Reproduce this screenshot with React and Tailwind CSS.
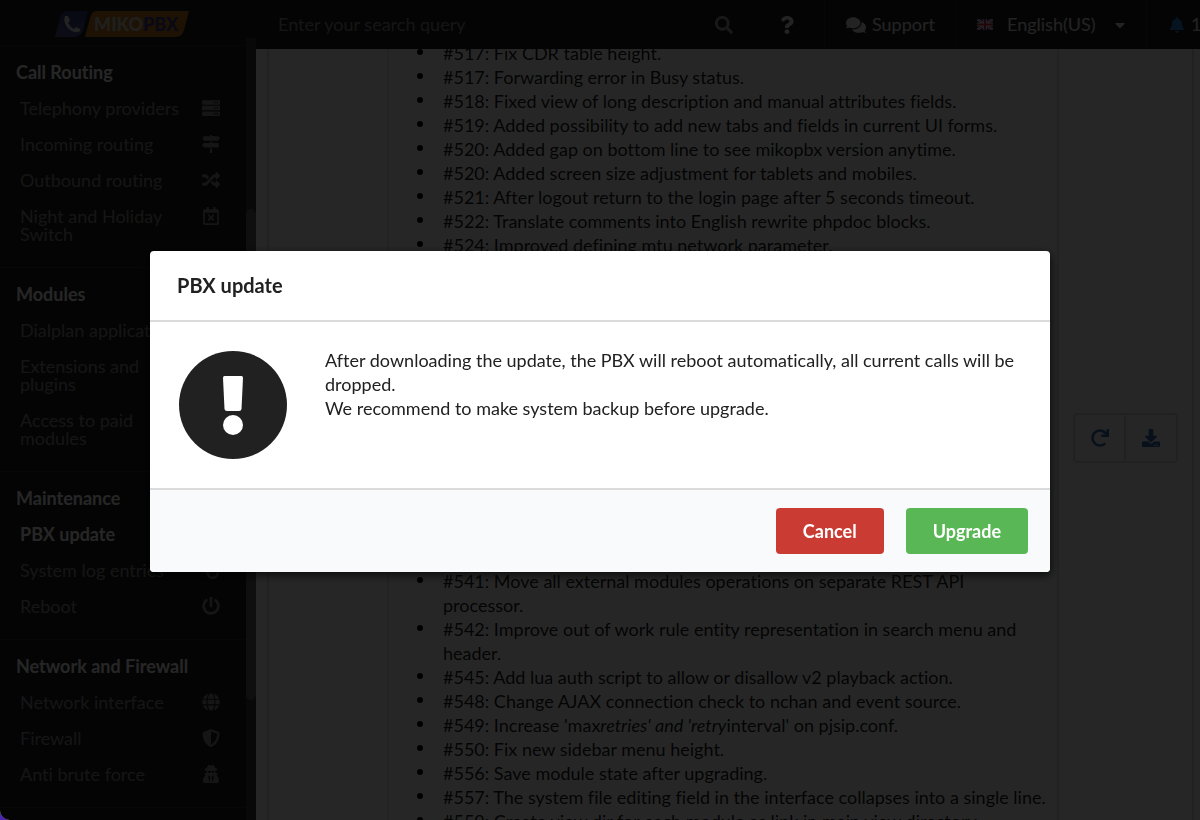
import {
  FaServer, FaMapSigns, FaRandom, FaRegCalendarTimes, FaPowerOff, FaStethoscope, FaGlobe,
  FaShieldAlt, FaUserSecret, FaSearch, FaQuestion, FaComments, FaBell, FaCaretDown,
  FaRedo, FaDownload,
} from 'react-icons/fa';

const groups = [
  {
    title: 'Call Routing',
    items: [
      { label: 'Telephony providers', icon: FaServer },
      { label: 'Incoming routing', icon: FaMapSigns },
      { label: 'Outbound routing', icon: FaRandom },
      { label: 'Night and Holiday Switch', icon: FaRegCalendarTimes },
    ],
  },
  {
    title: 'Modules',
    items: [
      { label: 'Dialplan applications' },
      { label: 'Extensions and plugins' },
      { label: 'Access to paid modules' },
    ],
  },
  {
    title: 'Maintenance',
    items: [
      { label: 'PBX update', active: true },
      { label: 'System log entries', icon: FaStethoscope },
      { label: 'Reboot', icon: FaPowerOff },
    ],
  },
  {
    title: 'Network and Firewall',
    items: [
      { label: 'Network interface', icon: FaGlobe },
      { label: 'Firewall', icon: FaShieldAlt },
      { label: 'Anti brute force', icon: FaUserSecret },
    ],
  },
];

const notesBefore = [
  '#517: Fix CDR table height.',
  '#517: Forwarding error in Busy status.',
  '#518: Fixed view of long description and manual attributes fields.',
  '#519: Added possibility to add new tabs and fields in current UI forms.',
  '#520: Added gap on bottom line to see mikopbx version anytime.',
  '#520: Added screen size adjustment for tablets and mobiles.',
  '#521: After logout return to the login page after 5 seconds timeout.',
  '#522: Translate comments into English rewrite phpdoc blocks.',
  '#524: Improved defining mtu network parameter.',
];

const notesAfter = [
  '#541: Move all external modules operations on separate REST API processor.',
  '#542: Improve out of work rule entity representation in search menu and header.',
  '#545: Add lua auth script to allow or disallow v2 playback action.',
  '#548: Change AJAX connection check to nchan and event source.',
  <>#549: Increase 'max<em>retries' and 'retry</em>interval' on pjsip.conf.</>,
  '#550: Fix new sidebar menu height.',
  '#556: Save module state after upgrading.',
  '#557: The system file editing field in the interface collapses into a single line.',
  '#559: Create view dir for each module as link in main view directory.',
];

function Logo() {
  return (
    <svg viewBox="0 0 134 26" className="h-[26px] w-[134px]" role="img" aria-label="MikoPBX">
      <defs>
        <linearGradient id="phone" x1="0" y1="0" x2="0" y2="1">
          <stop offset="0" stopColor="#2b3a7c" />
          <stop offset="1" stopColor="#5a5796" />
        </linearGradient>
      </defs>
      <path d="M11 0H33L28 19Q26 26 19 26H0L5 7Q7 0 11 0Z" fill="url(#phone)" />
      <path d="M41 0H134L129 19Q127 26 121 26H30L35 7Q37 0 41 0Z" fill="#c47a1a" />
      <path d="M10 5Q13 4 14 7L15 10L13 12Q15 16 19 18L21 16L25 18Q26 20 23 21Q17 22 12 16Q8 10 10 5Z" fill="#e6e6e6" />
      <text x="39" y="20" fontFamily="Lato, sans-serif" fontWeight="900" fontSize="18" fill="#d0d0d0">MIKO<tspan fill="#3f3c8c">PBX</tspan></text>
    </svg>
  );
}

function Flag() {
  return (
    <svg viewBox="0 0 16 11" className="h-[11px] w-4" aria-hidden="true">
      <rect width="16" height="11" fill="#2b3f8f" />
      <path d="M0 0L16 11M16 0L0 11" stroke="#fff" strokeWidth="2.4" />
      <path d="M0 0L16 11M16 0L0 11" stroke="#d8283b" strokeWidth="0.8" />
      <path d="M8 0V11M0 5.5H16" stroke="#fff" strokeWidth="3.4" />
      <path d="M8 0V11M0 5.5H16" stroke="#d8283b" strokeWidth="2" />
    </svg>
  );
}

function Sidebar() {
  return (
    <aside className="flex w-64 shrink-0 overflow-hidden bg-[#1b1c1d]">
      <div className="min-w-0 flex-1">
        <div className="flex h-[46px] items-end justify-center border-b border-[#2e2f30] pr-[2px] pb-2">
          <Logo />
        </div>
        <nav>
          {groups.map((g) => (
            <section key={g.title} className="border-b border-[#2e2f30] pt-2 pb-[15px]">
              <h2 className="px-4 py-[9px] leading-[18px] font-bold text-white">{g.title}</h2>
              {g.items.map(({ label, icon: Icon, active }) => (
                <a
                  key={label}
                  href="#"
                  className={
                    active
                      ? 'flex justify-between py-[9px] pr-[26px] pl-5 leading-[18px] font-bold text-white'
                      : 'flex justify-between py-[9px] pr-[26px] pl-5 leading-[18px] text-white/50'
                  }
                >
                  <span className="w-[165px]">{label}</span>
                  {Icon && <Icon className="size-[18px]" />}
                </a>
              ))}
            </section>
          ))}
        </nav>
      </div>
      <div className="flex w-[10px] flex-col pt-[38px]">
        <div className="flex-1 bg-[#303534] pt-[171px]">
          <div className="h-[491px] rounded-full bg-[#636363]" />
        </div>
      </div>
    </aside>
  );
}

function TopBar() {
  return (
    <header className="flex h-[49px] shrink-0 items-stretch overflow-hidden bg-[#1b1c1d] text-white/90">
      <label className="flex min-w-0 flex-1 items-center pr-[17px] pl-[22px] text-white/60">
        <input
          type="search"
          aria-label="Search"
          placeholder="Enter your search query"
          className="min-w-0 flex-1 bg-transparent outline-none placeholder:text-white/50"
        />
        <FaSearch className="size-[18px]" />
      </label>
      <button type="button" aria-label="Help" className="flex w-[75px] items-center justify-center border-r border-[#2e2f30]">
        <FaQuestion className="size-[18px]" />
      </button>
      <a href="#" className="flex w-[132px] items-center justify-center gap-[6px] border-r border-[#2e2f30]">
        <FaComments className="size-5" />
        Support
      </a>
      <button type="button" className="flex w-[190px] items-center border-r border-[#2e2f30] pl-5">
        <Flag />
        <span className="ml-[14px]">English(US)</span>
        <FaCaretDown className="ml-4 size-4" />
      </button>
      <a href="#" className="flex w-[53px] items-center gap-[6px] pl-[22px] whitespace-nowrap">
        <FaBell className="size-4 shrink-0 text-[#2185d0]" />
        1
      </a>
    </header>
  );
}

function ReleaseNotes() {
  return (
    <main className="flex min-h-0 flex-1 overflow-hidden pr-[6px] pl-[11px] text-black/90">
      <div className="flex flex-1 border-x-2 border-[#dededf]">
        <div className="w-[120px] border-r-2 border-[#e6e6e6]" />
        <div className="-mt-2 flex-1 pr-[10px] pl-[28px]">
          <ul>
            {notesBefore.map((n, i) => (
              <Note key={i}>{n}</Note>
            ))}
          </ul>
          <ul className="mt-[312px]">
            {notesAfter.map((n, i) => (
              <Note key={i}>{n}</Note>
            ))}
          </ul>
        </div>
        <div className="w-[135px] border-l-2 border-[#e0e0e0] pt-[364px] pl-[14px]">
          <div className="flex h-[50px] w-[105px] rounded border-2 border-[#dededf] text-[#2f6fb5]">
            <button type="button" aria-label="Reload" className="flex w-[51px] items-center justify-center border-r-2 border-[#dededf]">
              <FaRedo className="size-[18px]" />
            </button>
            <button type="button" aria-label="Download" className="flex flex-1 items-center justify-center">
              <FaDownload className="size-[18px]" />
            </button>
          </div>
        </div>
      </div>
    </main>
  );
}

function Note({ children }) {
  return (
    <li className="flex gap-5 leading-6">
      <span className="flex h-6 shrink-0 items-center pb-[2px]" aria-hidden="true">
        <span className="size-[6px] rounded-full bg-black" />
      </span>
      <span>{children}</span>
    </li>
  );
}

function UpdateDialog() {
  return (
    <div className="fixed inset-0 flex items-center justify-center rounded-bl-[10px] bg-black/85">
      <div
        role="dialog"
        aria-modal="true"
        aria-labelledby="dialog-title"
        className="mt-[3px] w-3/4 overflow-hidden rounded bg-white text-[#212121] shadow-[1px_3px_10px_rgba(0,0,0,0.7)]"
      >
        <h1 id="dialog-title" className="border-b-2 border-[#dbdbdb] px-[27px] py-[22px] text-xl leading-[25px] font-bold">
          PBX update
        </h1>
        <div className="flex gap-[38px] px-[29px] pt-[26px] pb-[29px]">
          <div className="mt-[3px] flex size-[108px] shrink-0 items-center justify-center rounded-full bg-[#212121] pt-[2px]">
            <svg viewBox="0 0 20 60" className="h-[60px] w-5 fill-white" aria-hidden="true">
              <path d="M1.5 0H18.500Q20 0 20 2L18.500 33Q18.300 35 16 35H4Q1.700 35 1.500 33L0 2Q0 0 1.500 0Z" />
              <circle cx="10" cy="49" r="10" />
            </svg>
          </div>
          <p className="leading-6">
            After downloading the update, the PBX will reboot automatically, all current calls will be dropped.
            <br />
            We recommend to make system backup before upgrade.
          </p>
        </div>
        <div className="flex justify-end gap-[22px] border-t-2 border-[#dbdbdb] bg-[#f9fafb] px-[22px] py-[18px] font-bold text-white">
          <button type="button" className="h-[46px] rounded bg-[#ca3b33] px-[27px]">Cancel</button>
          <button type="button" className="h-[46px] rounded bg-[#5ab755] px-[27px]">Upgrade</button>
        </div>
      </div>
    </div>
  );
}

export default function App() {
  return (
    <div className="bg-[#4c22b4] font-[Lato,sans-serif] text-[18px] [font-variant-ligatures:none]">
      <div className="flex h-screen overflow-hidden rounded-bl-[10px] bg-white">
        <Sidebar />
        <div className="flex min-w-0 flex-1 flex-col">
          <TopBar />
          <ReleaseNotes />
        </div>
      </div>
      <UpdateDialog />
    </div>
  );
}
